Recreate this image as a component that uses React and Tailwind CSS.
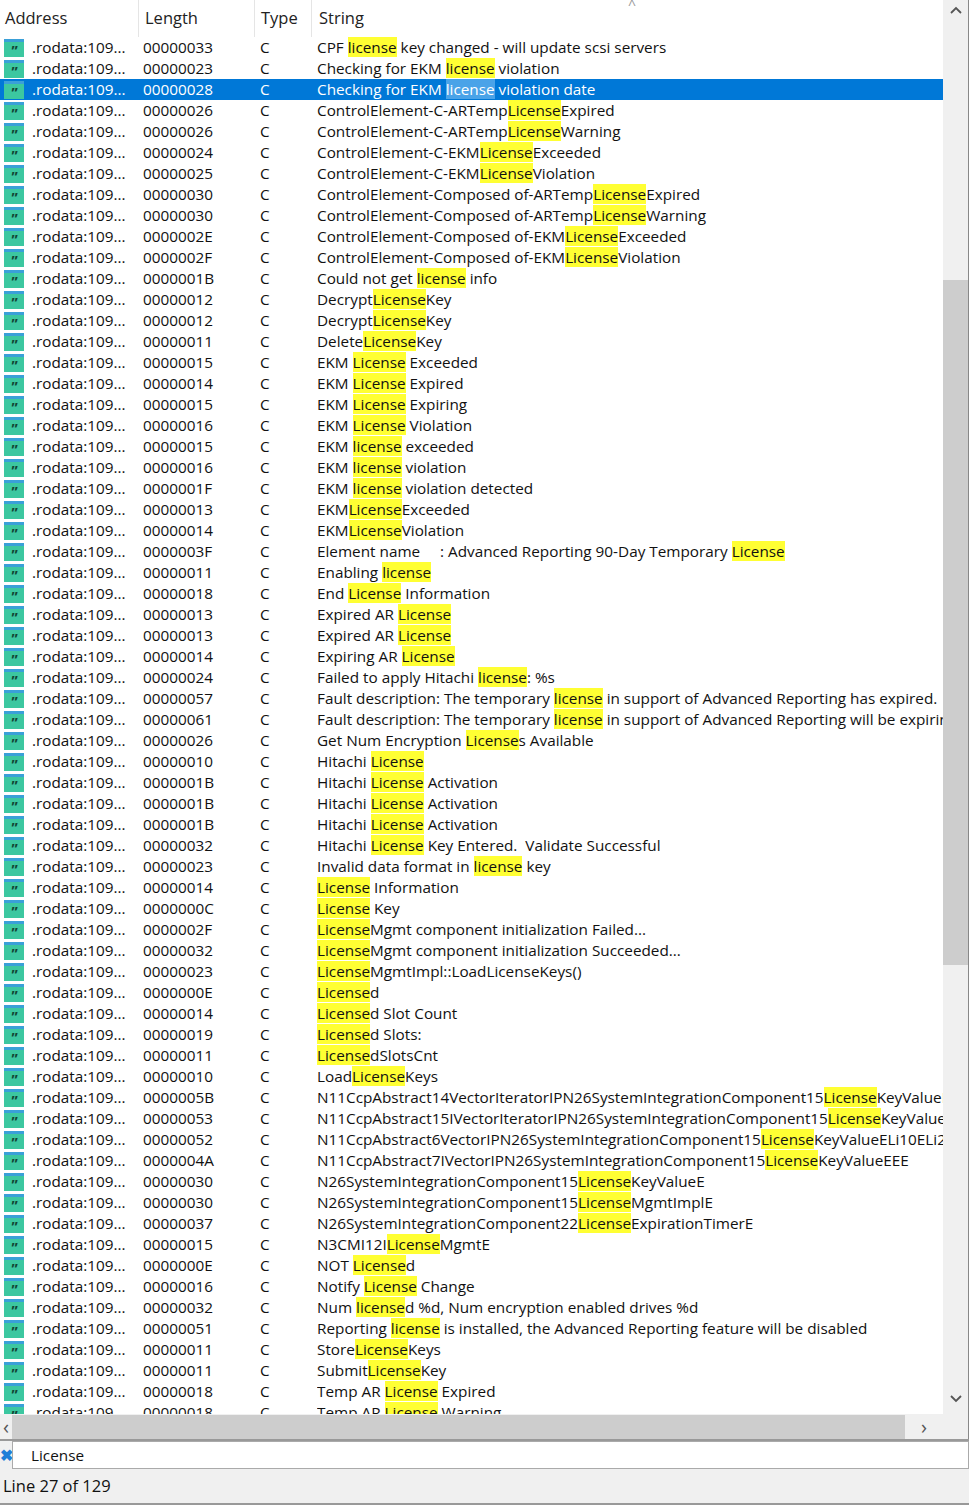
const rows = [
  ['00000033', 'CPF |license| key changed - will update scsi servers'],
  ['00000023', 'Checking for EKM |license| violation'],
  ['00000028', 'Checking for EKM |license| violation date'],
  ['00000026', 'ControlElement-C-ARTemp|License|Expired'],
  ['00000026', 'ControlElement-C-ARTemp|License|Warning'],
  ['00000024', 'ControlElement-C-EKM|License|Exceeded'],
  ['00000025', 'ControlElement-C-EKM|License|Violation'],
  ['00000030', 'ControlElement-Composed of-ARTemp|License|Expired'],
  ['00000030', 'ControlElement-Composed of-ARTemp|License|Warning'],
  ['0000002E', 'ControlElement-Composed of-EKM|License|Exceeded'],
  ['0000002F', 'ControlElement-Composed of-EKM|License|Violation'],
  ['0000001B', 'Could not get |license| info'],
  ['00000012', 'Decrypt|License|Key'],
  ['00000012', 'Decrypt|License|Key'],
  ['00000011', 'Delete|License|Key'],
  ['00000015', 'EKM |License| Exceeded'],
  ['00000014', 'EKM |License| Expired'],
  ['00000015', 'EKM |License| Expiring'],
  ['00000016', 'EKM |License| Violation'],
  ['00000015', 'EKM |license| exceeded'],
  ['00000016', 'EKM |license| violation'],
  ['0000001F', 'EKM |license| violation detected'],
  ['00000013', 'EKM|License|Exceeded'],
  ['00000014', 'EKM|License|Violation'],
  ['0000003F', 'Element name     : Advanced Reporting 90-Day Temporary |License|'],
  ['00000011', 'Enabling |license|'],
  ['00000018', 'End |License| Information'],
  ['00000013', 'Expired AR |License|'],
  ['00000013', 'Expired AR |License|'],
  ['00000014', 'Expiring AR |License|'],
  ['00000024', 'Failed to apply Hitachi |license|: %s'],
  ['00000057', 'Fault description: The temporary |license| in support of Advanced Reporting has expired.'],
  ['00000061', 'Fault description: The temporary |license| in support of Advanced Reporting will be expiring'],
  ['00000026', 'Get Num Encryption |License|s Available'],
  ['00000010', 'Hitachi |License|'],
  ['0000001B', 'Hitachi |License| Activation'],
  ['0000001B', 'Hitachi |License| Activation'],
  ['0000001B', 'Hitachi |License| Activation'],
  ['00000032', 'Hitachi |License| Key Entered.  Validate Successful'],
  ['00000023', 'Invalid data format in |license| key'],
  ['00000014', '|License| Information'],
  ['0000000C', '|License| Key'],
  ['0000002F', '|License|Mgmt component initialization Failed...'],
  ['00000032', '|License|Mgmt component initialization Succeeded...'],
  ['00000023', '|License|MgmtImpl::LoadLicenseKeys()'],
  ['0000000E', '|License|d'],
  ['00000014', '|License|d Slot Count'],
  ['00000019', '|License|d Slots:'],
  ['00000011', '|License|dSlotsCnt'],
  ['00000010', 'Load|License|Keys'],
  ['0000005B', 'N11CcpAbstract14VectorIteratorIPN26SystemIntegrationComponent15|License|KeyValueEEE'],
  ['00000053', 'N11CcpAbstract15IVectorIteratorIPN26SystemIntegrationComponent15|License|KeyValueEEE'],
  ['00000052', 'N11CcpAbstract6VectorIPN26SystemIntegrationComponent15|License|KeyValueELi10ELi2EEE'],
  ['0000004A', 'N11CcpAbstract7IVectorIPN26SystemIntegrationComponent15|License|KeyValueEEE'],
  ['00000030', 'N26SystemIntegrationComponent15|License|KeyValueE'],
  ['00000030', 'N26SystemIntegrationComponent15|License|MgmtImplE'],
  ['00000037', 'N26SystemIntegrationComponent22|License|ExpirationTimerE'],
  ['00000015', 'N3CMI12I|License|MgmtE'],
  ['0000000E', 'NOT |License|d'],
  ['00000016', 'Notify |License| Change'],
  ['00000032', 'Num |license|d %d, Num encryption enabled drives %d'],
  ['00000051', 'Reporting |license| is installed, the Advanced Reporting feature will be disabled'],
  ['00000011', 'Store|License|Keys'],
  ['00000011', 'Submit|License|Key'],
  ['00000018', 'Temp AR |License| Expired'],
  ['00000018', 'Temp AR |License| Warning'],
];

function Icon() {
  return (
    <div className="w-[20px] h-[18px] bg-[#3cc7a0] border-t-[3px] border-[#3aa0d8] flex items-center justify-center shrink-0">
      <span className="text-[#114433] text-[14px] font-bold leading-none tracking-[-1px] mt-[4px]">&#8221;</span>
    </div>
  );
}

function Str({ s, sel }) {
  const parts = s.split('|');
  return (
    <span className="whitespace-pre">
      {parts.map((p, i) =>
        i % 2 ? (
          <span key={i} className={sel ? 'bg-[#4aa3e8]' : 'bg-[#ffff33]'}>{p}</span>
        ) : (
          <span key={i}>{p}</span>
        )
      )}
    </span>
  );
}

export default function App() {
  return (
    <div className="w-[969px] h-[1505px] bg-white flex flex-col overflow-hidden text-[15.3px] text-[#111]" style={{ fontFamily: '"Open Sans", "Noto Sans", sans-serif' }}>
      <div className="flex flex-1 min-h-0">
        <div className="flex-1 min-w-0 flex flex-col overflow-hidden">
          <div className="h-[37px] flex shrink-0 text-[16.5px] text-[#222]">
            <div className="w-[139px] pl-[5px] border-r border-[#e5e5e5] pt-[6px]">Address</div>
            <div className="w-[116px] pl-[6px] border-r border-[#e5e5e5] pt-[6px]">Length</div>
            <div className="w-[57px] pl-[6px] border-r border-[#e5e5e5] pt-[6px]">Type</div>
            <div className="flex-1 pl-[7px] pt-[6px] relative">
              String
              <span className="absolute left-[316px] -top-[6px] text-[#999] text-[14px]">^</span>
            </div>
          </div>
          <div className="flex-1 overflow-hidden">
            {rows.map(([len, s], i) => {
              const sel = i === 2;
              return (
                <div key={i} className={`h-[21px] flex items-center whitespace-nowrap ${sel ? 'bg-[#0078d7] text-white' : ''}`}>
                  <div className="w-[139px] flex items-center pl-[4px] gap-[8px]">
                    <Icon />
                    <span>.rodata:109...</span>
                  </div>
                  <div className="w-[117px] pl-[4px]">{len}</div>
                  <div className="w-[61px] pl-[4px]">C</div>
                  <div className="flex-1 overflow-hidden"><Str s={s} sel={sel} /></div>
                </div>
              );
            })}
          </div>
          <div className="h-[25px] shrink-0 bg-[#f0f0f0] flex items-center">
            <span className="w-[12px] text-center text-[#555] text-[20px] leading-none">‹</span>
            <div className="w-[893px] h-[24px] bg-[#cdcdcd]"></div>
            <span className="flex-1 text-center text-[#555] text-[20px] leading-none">›</span>
          </div>
        </div>
        <div className="w-[26px] bg-[#f0f0f0] flex flex-col items-center border-r border-[#888]">
          <svg width="12" height="20" viewBox="0 0 12 20" className="shrink-0"><path d="M1 13 L6 8 L11 13" stroke="#555" strokeWidth="1.8" fill="none" /></svg>
          <div className="h-[260px]"></div>
          <div className="w-full h-[685px] bg-[#cdcdcd]"></div>
          <div className="flex-1"></div>
          <svg width="12" height="20" viewBox="0 0 12 20" className="mb-[30px] shrink-0"><path d="M1 7 L6 12 L11 7" stroke="#555" strokeWidth="1.8" fill="none" /></svg>
        </div>
      </div>
      <div className="h-[30px] shrink-0 bg-[#f0f0f0] flex items-stretch border-t-2 border-[#999]">
        <span className="w-[12px] text-[#1f7fd8] font-bold text-[16px] flex items-center justify-center">✖</span>
        <div className="flex-1 bg-white border border-[#aaa] flex items-center pl-[18px]">License</div>
      </div>
      <div className="h-[36px] shrink-0 bg-[#f0f0f0] border-b-2 border-[#999] flex items-center pl-[3px] text-[16.5px]">Line 27 of 129</div>
    </div>
  );
}
